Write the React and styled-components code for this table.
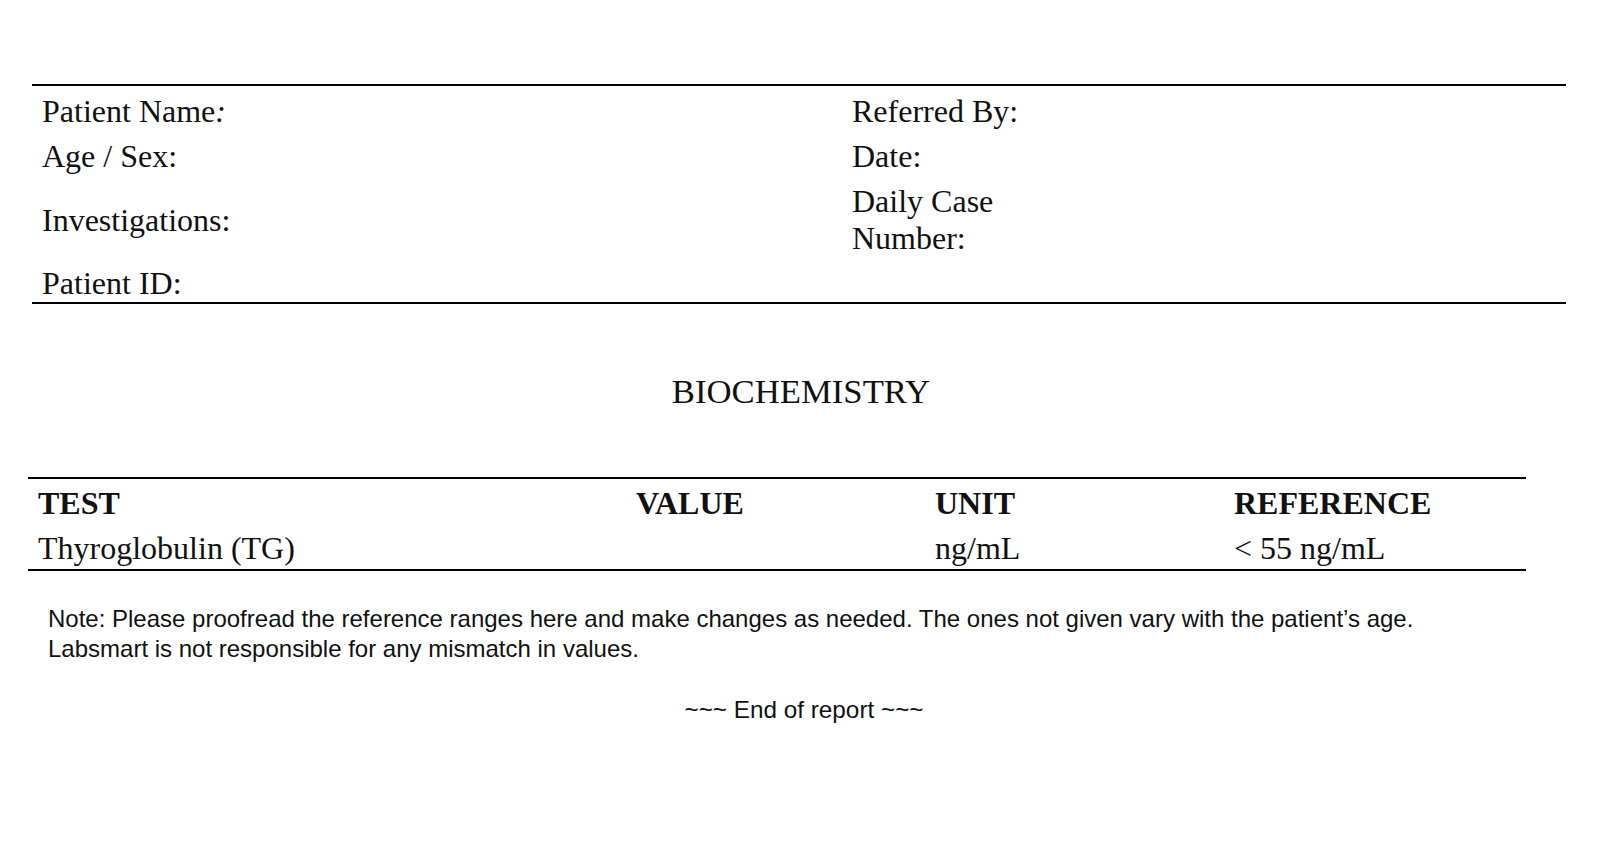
import React from "react";
import styled, { createGlobalStyle } from "styled-components";

const GlobalStyle = createGlobalStyle`
  html, body {
    margin: 0;
    padding: 0;
    background: #ffffff;
  }
  body {
    font-family: "Liberation Serif", "Times New Roman", serif;
    color: #111111;
  }
`;

const leftRows = [
  { label: "Patient Name", italicColon: true },
  { label: "Age / Sex" },
  { label: "Investigations" },
  { label: "Patient ID" },
];

const rightRows = [
  { label: "Referred By" },
  { label: "Date" },
  { label: "Daily Case Number" },
  { label: "" },
];

const columns = [
  { key: "test", title: "TEST", width: 598 },
  { key: "value", title: "VALUE", width: 299 },
  { key: "unit", title: "UNIT", width: 299 },
  { key: "reference", title: "REFERENCE", width: 302 },
];

const tests = [
  { name: "Thyroglobulin (TG)", value: "", unit: "ng/mL", reference: "< 55 ng/mL" },
];

const App = () => {
  return (
    <Page>
      <GlobalStyle />
      <PatientInfo>
        {leftRows.map((row, i) => (
          <React.Fragment key={row.label}>
            <InfoCell>
              {row.label}
              {row.italicColon ? <ItalicColon>:</ItalicColon> : ":"}
            </InfoCell>
            <InfoCell>
              <RightLabel>{rightRows[i].label ? rightRows[i].label + ":" : ""}</RightLabel>
            </InfoCell>
          </React.Fragment>
        ))}
      </PatientInfo>

      <SectionTitle>BIOCHEMISTRY</SectionTitle>

      <ResultsTable>
        <colgroup>
          {columns.map((c) => (
            <col key={c.key} style={{ width: c.width }} />
          ))}
        </colgroup>
        <thead>
          <tr>
            {columns.map((c) => (
              <HeadCell key={c.key}>{c.title}</HeadCell>
            ))}
          </tr>
        </thead>
        <tbody>
          {tests.map((t) => (
            <tr key={t.name}>
              <BodyCell>{t.name}</BodyCell>
              <BodyCell>{t.value}</BodyCell>
              <BodyCell>{t.unit}</BodyCell>
              <BodyCell>{t.reference}</BodyCell>
            </tr>
          ))}
        </tbody>
      </ResultsTable>

      <Note>
        Note: Please proofread the reference ranges here and make changes as needed. The ones not given vary with the patient’s age.
        <br />
        Labsmart is not responsible for any mismatch in values.
      </Note>

      <EndOfReport>~~~ End of report ~~~</EndOfReport>
    </Page>
  );
};

export default App;

const Page = styled.div`
  width: 1602px;
  padding-top: 84px;
  padding-bottom: 120px;
  box-sizing: border-box;
`;

const PatientInfo = styled.div`
  margin-left: 32px;
  width: 1534px;
  border-top: 2px solid #000;
  border-bottom: 2px solid #000;
  display: grid;
  grid-template-columns: 810px 1fr;
  font-size: 32px;
  line-height: 37px;
  padding-top: 3px;
`;

const InfoCell = styled.div`
  padding: 4px 10px;
  display: flex;
  align-items: center;
  &:nth-last-child(-n + 2) {
    padding-bottom: 0;
  }
`;

const RightLabel = styled.span`
  display: block;
  width: 200px;
`;

const ItalicColon = styled.span`
  font-style: italic;
`;

const SectionTitle = styled.h2`
  margin: 68px 0 0;
  text-align: center;
  font-weight: 400;
  font-size: 34.7px;
  line-height: 40px;
`;

const ResultsTable = styled.table`
  margin: 65px 0 0 28px;
  width: 1498px;
  border-collapse: collapse;
  table-layout: fixed;
  border-top: 2px solid #000;
  border-bottom: 2px solid #000;
  font-size: 32px;
  line-height: 36.8px;
`;

const HeadCell = styled.th`
  text-align: left;
  font-weight: 700;
  padding: 6px 10px 2px;
`;

const BodyCell = styled.td`
  padding: 6px 10px 2px;
`;

const Note = styled.p`
  margin: 33px 0 0;
  padding-left: 48px;
  font-family: "Liberation Sans", Arial, sans-serif;
  font-size: 24px;
  line-height: 30px;
  color: #111;
`;

const EndOfReport = styled.p`
  margin: 31px 0 0;
  padding-left: 6px;
  text-align: center;
  font-family: "Liberation Sans", Arial, sans-serif;
  font-size: 24.3px;
  line-height: 30px;
  color: #111;
`;
